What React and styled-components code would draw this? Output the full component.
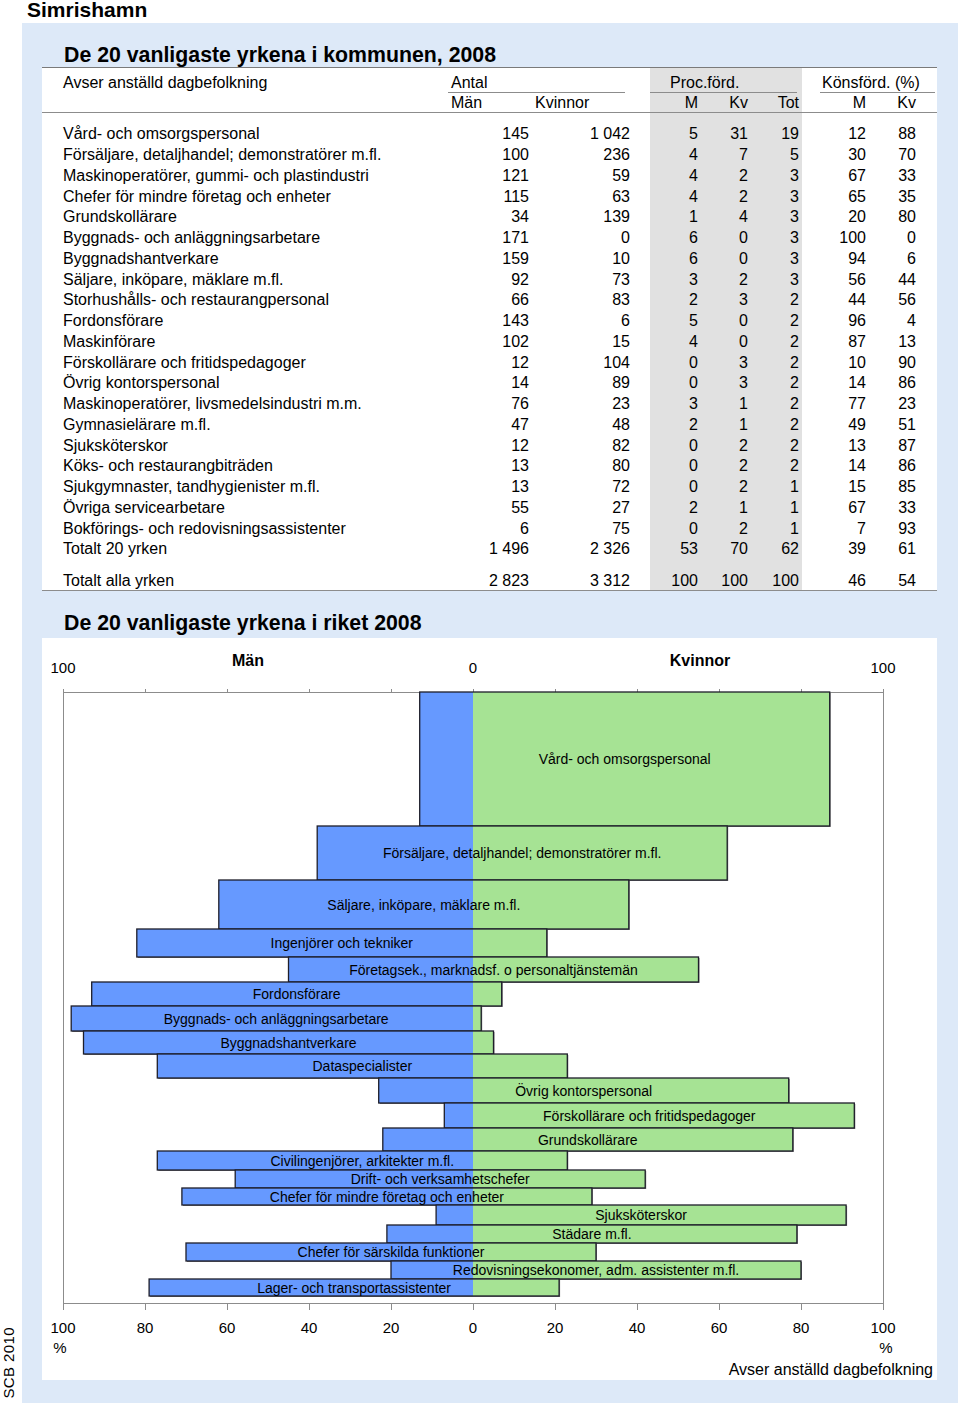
import styled, { createGlobalStyle } from 'styled-components'

const GlobalStyle = createGlobalStyle`
  body {
    margin: 0;
    background: #fff;
    color: #000;
    font-family: "Liberation Sans", Arial, sans-serif;
  }
`

// table: name, män, kvinnor, proc M, proc Kv, proc Tot, köns M, köns Kv
const OCCUPATIONS = [
  ['Vård- och omsorgspersonal', '145', '1 042', '5', '31', '19', '12', '88'],
  ['Försäljare, detaljhandel; demonstratörer m.fl.', '100', '236', '4', '7', '5', '30', '70'],
  ['Maskinoperatörer, gummi- och plastindustri', '121', '59', '4', '2', '3', '67', '33'],
  ['Chefer för mindre företag och enheter', '115', '63', '4', '2', '3', '65', '35'],
  ['Grundskollärare', '34', '139', '1', '4', '3', '20', '80'],
  ['Byggnads- och anläggningsarbetare', '171', '0', '6', '0', '3', '100', '0'],
  ['Byggnadshantverkare', '159', '10', '6', '0', '3', '94', '6'],
  ['Säljare, inköpare, mäklare m.fl.', '92', '73', '3', '2', '3', '56', '44'],
  ['Storhushålls- och restaurangpersonal', '66', '83', '2', '3', '2', '44', '56'],
  ['Fordonsförare', '143', '6', '5', '0', '2', '96', '4'],
  ['Maskinförare', '102', '15', '4', '0', '2', '87', '13'],
  ['Förskollärare och fritidspedagoger', '12', '104', '0', '3', '2', '10', '90'],
  ['Övrig kontorspersonal', '14', '89', '0', '3', '2', '14', '86'],
  ['Maskinoperatörer, livsmedelsindustri m.m.', '76', '23', '3', '1', '2', '77', '23'],
  ['Gymnasielärare m.fl.', '47', '48', '2', '1', '2', '49', '51'],
  ['Sjuksköterskor', '12', '82', '0', '2', '2', '13', '87'],
  ['Köks- och restaurangbiträden', '13', '80', '0', '2', '2', '14', '86'],
  ['Sjukgymnaster, tandhygienister m.fl.', '13', '72', '0', '2', '1', '15', '85'],
  ['Övriga servicearbetare', '55', '27', '2', '1', '1', '67', '33'],
  ['Bokförings- och redovisningsassistenter', '6', '75', '0', '2', '1', '7', '93'],
  ['Totalt 20 yrken', '1 496', '2 326', '53', '70', '62', '39', '61'],
]
const TOTAL_ALL = ['Totalt alla yrken', '2 823', '3 312', '100', '100', '100', '46', '54']

// column layout, data index per column (null = spacer column)
const COLUMNS = [
  { w: 398, pl: 21, align: 'left', data: 0 },
  { w: 91, pr: 2, data: 1 },
  { w: 101, pr: 2, data: 2 },
  { w: 18, data: null },
  { w: 50, pr: 2, shade: true, data: 3 },
  { w: 50, pr: 2, shade: true, data: 4 },
  { w: 52, pr: 3, shade: true, data: 5 },
  { w: 16, data: null },
  { w: 50, pr: 2, data: 6 },
  { w: 69, pr: 21, data: 7 },
]

// riket: andel män / kvinnor (%) och stapelhöjd
const NATIONAL = [
  { name: 'Vård- och omsorgspersonal', m: 13, kv: 87, h: 134 },
  { name: 'Försäljare, detaljhandel; demonstratörer m.fl.', m: 38, kv: 62, h: 54 },
  { name: 'Säljare, inköpare, mäklare m.fl.', m: 62, kv: 38, h: 49 },
  { name: 'Ingenjörer och tekniker', m: 82, kv: 18, h: 28 },
  { name: 'Företagsek., marknadsf. o personaltjänstemän', m: 45, kv: 55, h: 25 },
  { name: 'Fordonsförare', m: 93, kv: 7, h: 24 },
  { name: 'Byggnads- och anläggningsarbetare', m: 98, kv: 2, h: 25 },
  { name: 'Byggnadshantverkare', m: 95, kv: 5, h: 23 },
  { name: 'Dataspecialister', m: 77, kv: 23, h: 24 },
  { name: 'Övrig kontorspersonal', m: 23, kv: 77, h: 25 },
  { name: 'Förskollärare och fritidspedagoger', m: 7, kv: 93, h: 25 },
  { name: 'Grundskollärare', m: 22, kv: 78, h: 23 },
  { name: 'Civilingenjörer, arkitekter m.fl.', m: 77, kv: 23, h: 19 },
  { name: 'Drift- och verksamhetschefer', m: 58, kv: 42, h: 18 },
  { name: 'Chefer för mindre företag och enheter', m: 71, kv: 29, h: 17 },
  { name: 'Sjuksköterskor', m: 9, kv: 91, h: 20 },
  { name: 'Städare m.fl.', m: 21, kv: 79, h: 18 },
  { name: 'Chefer för särskilda funktioner', m: 70, kv: 30, h: 18 },
  { name: 'Redovisningsekonomer, adm. assistenter m.fl.', m: 20, kv: 80, h: 18 },
  { name: 'Lager- och transportassistenter', m: 79, kv: 21, h: 17 },
]

const CENTER = 473
const UNIT = 4.1
const AXIS_TOP = 692
const AXIS_BOTTOM = 1303
const BLUE = '#6699ff'
const GREEN = '#a6e394'
const RULE = '#8c8c8c'

const Page = styled.div`
  width: 960px;
  display: grid;
  grid-template-columns: 22px 936px;
  grid-template-rows: 23px auto;
`
const Title = styled.h1`
  grid-column: 1 / -1;
  margin: 0;
  padding-left: 27px;
  font-size: 21px;
  line-height: 19px;
  font-weight: 700;
`
const Stamp = styled.div`
  align-self: end;
  justify-self: start;
  margin-bottom: 5px;
  writing-mode: vertical-rl;
  transform: rotate(180deg);
  font-size: 15px;
  line-height: 17px;
  letter-spacing: 0.4px;
`
const Panel = styled.main`
  background: #dde9f8;
  padding: 0 21px 23px 20px;
`
const Heading = styled.h2`
  margin: 0;
  padding: 21px 0 ${(p) => p.$after || 0}px 22px;
  font-size: 21.3px;
  line-height: 23px;
  font-weight: 700;
`
const TableCard = styled.section`
  background: #fff;
  border-top: 1px solid #7a7a7a;
  border-bottom: 1px solid ${RULE};
`
const Grid = styled.table`
  width: 100%;
  table-layout: fixed;
  border-collapse: separate;
  border-spacing: 0;
  font-size: 16px;
`
const Cell = styled.td`
  padding: 0 ${(p) => p.$pr || 0}px 0 ${(p) => p.$pl || 0}px;
  text-align: ${(p) => p.$align || 'right'};
  background: ${(p) => (p.$shade ? '#e1e1e1' : 'transparent')};
  line-height: 20.75px;
  white-space: nowrap;
`
const BodyRow = styled.tr`
  & > td {
    padding-top: ${(p) => p.$gap || 0}px;
    line-height: ${(p) => p.$lh || 20.75}px;
  }
`
const GroupRow = styled.tr`
  & > td {
    vertical-align: top;
    padding-top: 6px;
    line-height: 17px;
  }
`
const LabelRow = styled.tr`
  & > td {
    padding-top: 1px;
    padding-bottom: 1px;
    line-height: 17px;
    border-bottom: 1px solid ${RULE};
  }
`
const GroupHead = styled.div`
  margin: 0 ${(p) => p.$mr || 0}px 0 ${(p) => p.$ml || 0}px;
  padding: 0 0 1px ${(p) => p.$pl || 0}px;
  border-bottom: 1px solid ${RULE};
  text-align: left;
`
const ChartCard = styled.section`
  background: #fff;
  display: flex;
  flex-direction: column;
`
const Plot = styled.svg`
  display: block;
  width: 895px;
  height: 720px;
  font-family: "Liberation Sans", Arial, sans-serif;
`
const Footnote = styled.p`
  margin: 0;
  padding: 3px 4px 1px 0;
  text-align: right;
  font-size: 16px;
  line-height: 18px;
`

function DataRow({ values, gap, lh }) {
  return (
    <BodyRow $gap={gap} $lh={lh}>
      {COLUMNS.map((c, i) => (
        <Cell key={i} $pl={c.pl} $pr={c.pr} $align={c.align} $shade={c.shade}>
          {c.data === null ? '' : values[c.data].replace(' ', '\u00a0')}
        </Cell>
      ))}
    </BodyRow>
  )
}

function MunicipalTable() {
  const shaded = (i) => COLUMNS[i].shade
  return (
    <TableCard>
      <Grid>
        <colgroup>
          {COLUMNS.map((c, i) => <col key={i} style={{ width: c.w }} />)}
        </colgroup>
        <thead>
          <GroupRow>
            <Cell $align="left" $pl={21}>Avser anställd dagbefolkning</Cell>
            <Cell colSpan={2}>
              <GroupHead $ml={8} $mr={7} $pl={3}>Antal</GroupHead>
            </Cell>
            <Cell />
            <Cell colSpan={3} $shade>
              <GroupHead $mr={5} $pl={20}>Proc.förd.</GroupHead>
            </Cell>
            <Cell />
            <Cell colSpan={2}>
              <GroupHead $ml={2} $mr={2} $pl={2}>Könsförd. (%)</GroupHead>
            </Cell>
          </GroupRow>
          <LabelRow>
            <Cell />
            <Cell $align="left" $pl={11}>Män</Cell>
            <Cell $align="left" $pl={4}>Kvinnor</Cell>
            <Cell />
            <Cell $pr={2} $shade={shaded(4)}>M</Cell>
            <Cell $pr={2} $shade={shaded(5)}>Kv</Cell>
            <Cell $pr={3} $shade={shaded(6)}>Tot</Cell>
            <Cell />
            <Cell $pr={2}>M</Cell>
            <Cell $pr={21}>Kv</Cell>
          </LabelRow>
        </thead>
        <tbody>
          {OCCUPATIONS.map((row, i) => (
            <DataRow key={row[0]} values={row} gap={i === 0 ? 11.4 : 0} />
          ))}
          <DataRow values={TOTAL_ALL} gap={10.5} lh={19.7} />
        </tbody>
      </Grid>
    </TableCard>
  )
}

function NationalChart() {
  let y = AXIS_TOP
  const bars = NATIONAL.map((b) => {
    const top = y
    y += b.h
    return { ...b, top, left: CENTER - b.m * UNIT, right: CENTER + b.kv * UNIT }
  })
  const ticks = Array.from({ length: 11 }, (_, i) => 63 + i * 82)
  const tickLabels = ['100', '80', '60', '40', '20', '0', '20', '40', '60', '80', '100']

  return (
    <ChartCard>
      <Plot viewBox="42 638 895 720">
        <g fontSize="15" textAnchor="middle">
          <text x={63} y={673.4}>100</text>
          <text x={473} y={673.4}>0</text>
          <text x={883} y={673.4}>100</text>
        </g>
        <g fontSize="16" fontWeight="700" textAnchor="middle">
          <text x={248} y={665.8}>Män</text>
          <text x={700} y={665.8}>Kvinnor</text>
        </g>

        <g stroke={RULE} strokeWidth="1" fill="none">
          <line x1={63} y1={AXIS_TOP + 0.5} x2={883} y2={AXIS_TOP + 0.5} />
          <line x1={63} y1={AXIS_BOTTOM + 0.5} x2={883} y2={AXIS_BOTTOM + 0.5} />
          <line x1={63.5} y1={AXIS_TOP} x2={63.5} y2={AXIS_BOTTOM} />
          <line x1={883.5} y1={AXIS_TOP} x2={883.5} y2={AXIS_BOTTOM} />
          {ticks.map((x) => (
            <g key={x}>
              <line x1={x + 0.5} y1={AXIS_TOP - 3} x2={x + 0.5} y2={AXIS_TOP} />
              <line x1={x + 0.5} y1={AXIS_BOTTOM} x2={x + 0.5} y2={AXIS_BOTTOM + 7} />
            </g>
          ))}
        </g>

        {bars.map((b) => (
          <g key={b.name}>
            <rect x={b.left + 1} y={b.top + 1} width={b.right - b.left} height={b.h} fill="#7d7d7d" />
            <rect x={b.left} y={b.top} width={CENTER - b.left} height={b.h} fill={BLUE} />
            <rect x={CENTER} y={b.top} width={b.right - CENTER} height={b.h} fill={GREEN} />
            <rect
              x={b.left}
              y={b.top}
              width={b.right - b.left}
              height={b.h}
              fill="none"
              stroke="#1e1e2a"
              strokeWidth="1.3"
            />
            <text x={(b.left + b.right) / 2} y={b.top + b.h / 2 + 5} fontSize="14" textAnchor="middle">
              {b.name}
            </text>
          </g>
        ))}

        <g fontSize="15" textAnchor="middle">
          {ticks.map((x, i) => (
            <text key={x} x={x} y={1333.4}>{tickLabels[i]}</text>
          ))}
          <text x={60} y={1353.4}>%</text>
          <text x={886} y={1353.4}>%</text>
        </g>
      </Plot>
      <Footnote>Avser anställd dagbefolkning</Footnote>
    </ChartCard>
  )
}

export default function App() {
  return (
    <>
      <GlobalStyle />
      <Page>
        <Title>Simrishamn</Title>
        <Stamp>SCB 2010</Stamp>
        <Panel>
          <Heading>De 20 vanligaste yrkena i kommunen, 2008</Heading>
          <MunicipalTable />
          <Heading $after={3}>De 20 vanligaste yrkena i riket 2008</Heading>
          <NationalChart />
        </Panel>
      </Page>
    </>
  )
}
